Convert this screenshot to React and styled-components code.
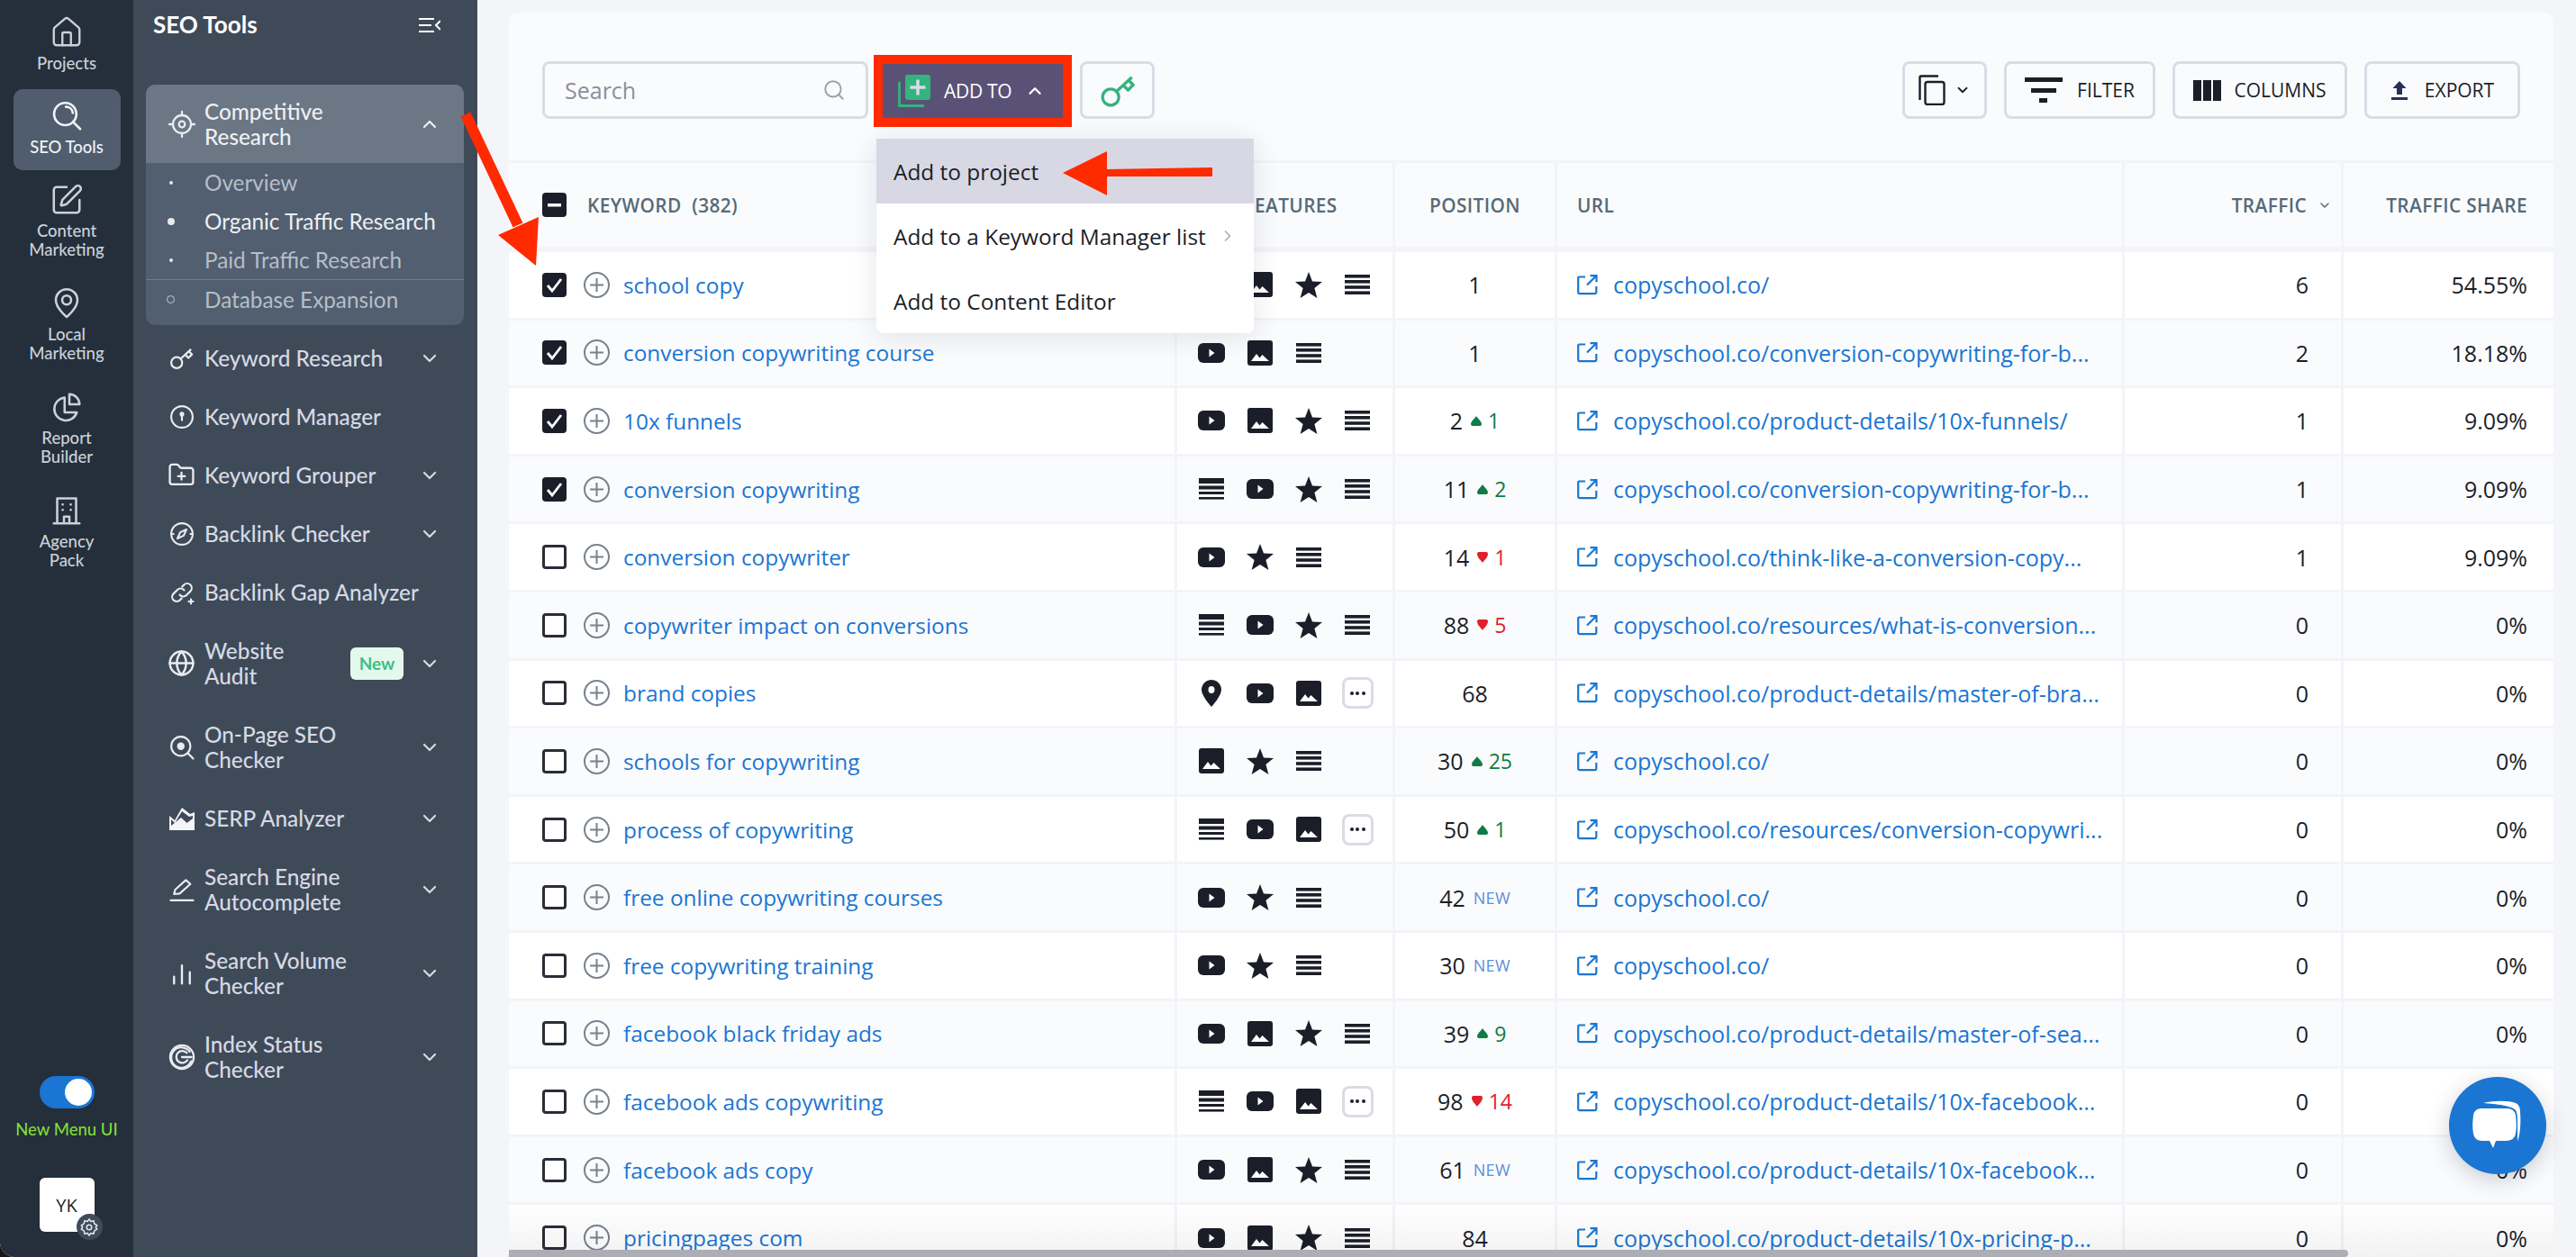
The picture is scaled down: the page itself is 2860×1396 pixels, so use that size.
import styled, { createGlobalStyle } from "styled-components";
import { ChevronDown, ChevronUp, ChevronRight, House, SquarePen, Globe, FolderPlus, Search } from "lucide-react";

const GlobalStyle = createGlobalStyle`
html, body {
    margin: 0;
    padding: 0;
    height: 100%;
    background: #1b1512;
}
* { box-sizing: border-box; }
`

const Page = styled.div`
width: 2860px;
height: 1396px;
display: flex;
overflow: hidden;
position: relative;
border-bottom-left-radius: 16px;
font-family: "Open Sans", sans-serif;
background: #F4F5F9;
`

///// left rail

const Rail = styled.nav`
width: 148px;
flex: none;
display: flex;
flex-direction: column;
align-items: center;
gap: 3.5px;
padding: 6px 0 28px;
background: #242F3B;
font-family: Lato, sans-serif;
`
const RailItem = styled.div`
width: 119px;
flex: none;
height: ${({$double})=>$double ? "111.5px" : "89.5px"};
padding-top: 11.5px;
display: flex;
flex-direction: column;
align-items: center;
border-radius: 10px;
color: ${({$active})=>$active ? "#F0F2F5" : "#CBD1D9"};
background: ${({$active})=>$active ? "#4F5D6E" : "transparent"};
font-size: 18.5px;
line-height: 21.5px;
font-weight: 500;
text-align: center;
`
const RailIcon = styled.div`
height: 36px;
margin-bottom: 6px;
display: flex;
align-items: center;
justify-content: center;
`
const RailBottom = styled.div`
margin-top: auto;
display: flex;
flex-direction: column;
align-items: center;
`
const Toggle = styled.div`
width: 61px;
height: 36px;
padding: 3px;
display: flex;
justify-content: flex-end;
border-radius: 18px;
background: #1A76D2;
`
const ToggleKnob = styled.div`
width: 30px;
height: 30px;
border-radius: 50%;
background: white;
`
const ToggleLabel = styled.div`
margin: 13px 0 44px;
color: #7FDB3A;
font-size: 18.5px;
line-height: 20px;
font-weight: 500;
white-space: nowrap;
`
const Avatar = styled.div`
width: 61px;
height: 60px;
position: relative;
display: flex;
align-items: center;
justify-content: center;
border-radius: 6px;
background: white;
color: #1B1E28;
font-size: 20px;
font-weight: 500;
font-family: "Open Sans", sans-serif;
`
const GearBadge = styled.div`
position: absolute;
right: -9px;
bottom: -9px;
width: 29px;
height: 29px;
display: flex;
align-items: center;
justify-content: center;
border-radius: 50%;
background: #3E4B5C;
color: #E3E7EC;
`

///// tools panel

const Panel = styled.aside`
width: 382px;
flex: none;
padding: 0 15px 0 14px;
background: #3F4A59;
font-family: Lato, sans-serif;
`
const PanelHead = styled.div`
height: 94px;
padding: 10px 26px 0 8px;
display: flex;
align-items: flex-start;
justify-content: space-between;
color: white;
font-size: 26px;
line-height: 34px;
font-weight: 700;
`
const Group = styled.div`
margin-bottom: 4px;
overflow: hidden;
border-radius: 10px;
background: #515F70;
`
const ToolRow = styled.div`
height: ${({$double})=>$double ? "93px" : "65px"};
display: flex;
align-items: center;
padding-right: 26px;
color: #D6DAE4;
font-size: 24.3px;
line-height: 28px;
font-weight: 500;
`
const GroupHead = styled(ToolRow)`
height: 87px;
color: #EDEFF3;
background: #6B7784;
`
const ToolIcon = styled.div`
width: 65px;
padding-left: 14px;
flex: none;
display: flex;
align-items: center;
justify-content: center;
color: #E9ECF0;
`
const ToolName = styled.div`
flex: 1;
`
const NewBadge = styled.div`
width: 59px;
height: 36px;
margin-right: 17px;
display: flex;
align-items: center;
justify-content: center;
border-radius: 6px;
background: #E4F8ED;
color: #3DBE82;
font-size: 19px;
font-weight: 700;
`
const SubItem = styled.div`
height: 43px;
display: flex;
align-items: center;
color: ${({$active})=>$active ? "#EDEFF3" : "#B6BEC9"};
font-size: 24.3px;
`
const SubBullet = styled.span`
width: 65px;
padding-right: 10px;
flex: none;
display: flex;
align-items: center;
justify-content: center;
&::before{
    content: "";
    width: ${({$active})=>$active ? "8px" : "4px"};
    height: ${({$active})=>$active ? "8px" : "4px"};
    border-radius: 50%;
    background: #E6E9ED;
}
`
const SubItemLast = styled(SubItem)`
height: 51px;
padding-bottom: 7px;
border-top: 1.5px solid #6F7E90;
`
const HollowBullet = styled.span`
width: 65px;
padding-right: 10px;
flex: none;
display: flex;
align-items: center;
justify-content: center;
&::before{
    content: "";
    width: 7px;
    height: 7px;
    border-radius: 50%;
    border: 1px solid #C6CDD6;
}
`

///// content card

const Main = styled.main`
flex: 1;
min-width: 0;
padding: 14px 25px 0 35px;
`
const Card = styled.div`
height: 1382px;
position: relative;
overflow: hidden;
border-radius: 10px 10px 0 0;
background: #FAFBFD;
`
const Toolbar = styled.div`
height: 164px;
padding: 54px 37px 0;
display: flex;
align-items: flex-start;
`
const SearchBox = styled.div`
width: 362px;
height: 64px;
padding: 0 22px;
display: flex;
align-items: center;
justify-content: space-between;
border: 3px solid #DBDBE7;
border-radius: 8px;
color: #8B9099;
font-size: 25px;
`
const AddWrap = styled.div`
margin: 3px 19px 0 16px;
position: relative;
z-index: 3;
`
const AddButton = styled.div`
width: 200px;
height: 60px;
padding-left: 17px;
display: flex;
align-items: center;
outline: 10px solid #FF2A00;
background: #5A5276;
color: white;
font-size: 21px;
font-weight: 500;
`
const AddLabel = styled.span`
margin: 0 15px 0 15px;
letter-spacing: -0.3px;
`
const Dropdown = styled.div`
position: absolute;
top: 83px;
left: -7px;
width: 419px;
overflow: hidden;
border-radius: 0 0 8px 8px;
background: white;
box-shadow: 0 4px 30px rgba(40,44,70,.12);
`
const DropdownItem = styled.div`
height: 72px;
padding: 0 19px;
display: flex;
align-items: center;
justify-content: space-between;
background: ${({$active})=>$active ? "#D8D8E4" : "white"};
color: #1B1E28;
font-size: 24.4px;
`
const IconButton = styled.div`
height: 64px;
flex: none;
display: flex;
align-items: center;
justify-content: center;
gap: ${({$gap})=>$gap || 14}px;
width: ${({$width})=>$width}px;
border: 3px solid #DBDBE7;
border-radius: 8px;
color: #1B1E28;
font-size: 21px;
font-weight: 500;
`
const Spacer = styled.div`
flex: 1;
`
const ToolbarRight = styled.div`
display: flex;
gap: 19px;
`

///// table

const Table = styled.div`
display: flex;
flex-direction: column;
gap: 3px;
padding-top: 3px;
background: #F3F4F8;
`
const HeaderRow = styled.div`
display: grid;
grid-template-columns: 739px 239px 177px 627px 240px 233px;
column-gap: 3px;
height: 93px;
margin-bottom: 3px;
`
const Row = styled.div`
display: grid;
grid-template-columns: 739px 239px 177px 627px 240px 233px;
column-gap: 3px;
height: 72.6px;
`
const HeaderCell = styled.div`
display: flex;
align-items: center;
justify-content: ${({$align})=>$align || "flex-start"};
padding: ${({$pad})=>$pad || "0 29px"};
background: #FAFBFD;
color: #566A78;
font-size: 20.8px;
font-weight: 600;
letter-spacing: .4px;
white-space: nowrap;
`
const Cell = styled.div`
display: flex;
align-items: center;
background: ${({$odd})=>$odd ? "white" : "#FAFBFD"};
color: #1B1E28;
font-size: 25px;
white-space: nowrap;
`
const KeywordCell = styled(Cell)`
padding-left: 37px;
`
const KeywordLink = styled.span`
margin-left: 15px;
color: #1A76D2;
font-size: 24.4px;
`
const CheckBox = styled.div`
width: 27px;
height: 27px;
flex: none;
display: flex;
align-items: center;
justify-content: center;
border: ${({$on})=>$on ? "none" : "3px solid #2A2D38"};
border-radius: 4px;
background: ${({$on})=>$on ? "#1B1E28" : "white"};
color: white;
`
const PlusCircle = styled.div`
width: 29px;
height: 29px;
margin-left: 19px;
flex: none;
display: flex;
align-items: center;
justify-content: center;
border: 2.5px solid #76828E;
border-radius: 50%;
color: #76828E;
`
const FeatureCell = styled(Cell)`
display: grid;
grid-template-columns: repeat(4, 54px);
padding-left: 11px;
justify-items: center;
color: #1B1E28;
`
const PositionCell = styled(Cell)`
justify-content: center;
gap: 9px;
`
const Delta = styled.span`
display: inline-flex;
align-items: center;
gap: 7px;
font-size: 23px;
color: ${({$up})=>$up ? "#0F7B46" : "#E0202C"};
`
const NewTag = styled.span`
font-size: 18px;
font-weight: 500;
letter-spacing: .3px;
color: #5B8FD8;
`
const UrlCell = styled(Cell)`
padding-left: 22px;
gap: 17px;
color: #1A76D2;
`
const NumberCell = styled(Cell)`
justify-content: flex-end;
padding-right: ${({$pad})=>$pad}px;
`
const MoreButton = styled.div`
width: 35px;
height: 35px;
display: flex;
align-items: center;
justify-content: center;
gap: 2.5px;
border: 3px solid #DBDBE7;
border-radius: 8px;
background: white;
`
const MoreDot = styled.i`
width: 4px;
height: 4px;
border-radius: 50%;
background: #1B1E28;
`

///// floating parts

const ScrollThumb = styled.div`
position: absolute;
left: 0;
bottom: 0;
width: 2042px;
height: 8px;
border-radius: 0 6px 6px 0;
background: #ADADB6;
`
const BottomShade = styled.div`
position: absolute;
left: 0;
right: 0;
bottom: 0;
height: 60px;
pointer-events: none;
background: linear-gradient(to bottom, rgba(0,0,0,0), rgba(0,0,0,.05));
`
const ChatBubble = styled.div`
position: absolute;
left: 2719px;
top: 1196px;
width: 108px;
height: 108px;
display: flex;
align-items: center;
justify-content: center;
border-radius: 50%;
background: #1A76D2;
box-shadow: 0 6px 24px rgba(30,40,60,.22);
`
const Annotations = styled.svg`
position: absolute;
left: 0;
top: 0;
z-index: 5;
pointer-events: none;
`

///// icons

const Icon = ({size=30, children, ...rest})=>(
    <svg width={size} height={size} viewBox="0 0 24 24" fill="none" stroke="currentColor" strokeWidth="1.7" strokeLinecap="round" strokeLinejoin="round" {...rest}>{children}</svg>
);

const YoutubeIcon = ()=>(
    <svg width="30" height="22" viewBox="0 0 30 22"><rect width="30" height="22" rx="6" fill="#1B1E28"/><path d="M12.5 6.5v9l6-4.5z" fill="white"/></svg>
);
const ImageIcon = ()=>(
    <svg width="28" height="28" viewBox="0 0 28 28"><rect width="28" height="28" rx="3" fill="#1B1E28"/><path d="M4 23l6-8 3.5 4.5 3-3.5L24 23z" fill="white"/></svg>
);
const StarIcon = ()=>(
    <svg width="30" height="29" viewBox="0 0 30 29"><path d="M15 0l4 10.5 11 .6-8.6 6.900 3 11L15 23l-9.400 6 3-11L0 11.100l11-.6z" fill="#1B1E28"/></svg>
);
const LinesIcon = ()=>(
    <svg width="28" height="22" viewBox="0 0 28 22" fill="#1B1E28"><rect width="28" height="3.600"/><rect y="6" width="28" height="3.600"/><rect y="12.200" width="28" height="3.600"/><rect y="18.400" width="28" height="3.600"/></svg>
);
const ParagraphIcon = ()=>(
    <svg width="28" height="24" viewBox="0 0 28 24" fill="#1B1E28"><rect width="28" height="6"/><rect y="8.500" width="28" height="4"/><rect y="15" width="28" height="3"/><rect y="21" width="28" height="2.600"/></svg>
);
const PinIcon = ()=>(
    <svg width="22" height="30" viewBox="0 0 22 30"><path d="M11 0C4.900 0 0 4.900 0 11c0 7 11 19 11 19s11-12 11-19C22 4.900 17.100 0 11 0z" fill="#1B1E28"/><ellipse cx="11" cy="11" rx="3.500" ry="4" fill="white"/></svg>
);
const FEATURE_ICONS = {
    yt: YoutubeIcon,
    img: ImageIcon,
    star: StarIcon,
    lines: LinesIcon,
    para: ParagraphIcon,
    pin: PinIcon,
    more: ()=>(<MoreButton><MoreDot/><MoreDot/><MoreDot/></MoreButton>),
};

const KeyIcon = ({size=28, color="currentColor"})=>(
    <svg width={size} height={size} viewBox="0 0 28 28" fill="none" stroke={color} strokeWidth="2.300" strokeLinejoin="round"><circle cx="8.500" cy="19.500" r="6.300"/><path d="M13 15L25 4M18.500 10.500l3.500 3.500 4-4-3.500-3.500"/></svg>
);
const CopyPlusIcon = ()=>(
    <svg width="36" height="36" viewBox="0 0 36 36"><path d="M1.500 8v26.500H29" fill="none" stroke="#35B37E" strokeWidth="2.800"/><rect x="8" y="0" width="28" height="28" rx="3" fill="#35B37E"/><path d="M22 5.500v17M13.500 14h17" stroke="#D8DEE4" strokeWidth="3.400"/></svg>
);
const DevicesIcon = ()=>(
    <svg width="30" height="34" viewBox="0 0 30 34" fill="none" stroke="#1B1E28" strokeWidth="2.400"><path d="M1.500 28V3q0-1.500 1.500-1.500h19"/><rect x="7.500" y="8" width="21" height="25" rx="2.500"/></svg>
);
const FilterIcon = ()=>(
    <svg width="42" height="28" viewBox="0 0 42 28" fill="#1B1E28"><rect width="42" height="5"/><rect x="7" y="12" width="28" height="5"/><rect x="16" y="23" width="9" height="5"/></svg>
);
const ColumnsIcon = ()=>(
    <svg width="31" height="23" viewBox="0 0 31 23" fill="#1B1E28"><rect width="9" height="23"/><rect x="11" width="9" height="23"/><rect x="22" width="9" height="23"/></svg>
);
const ExportIcon = ()=>(
    <svg width="20" height="21" viewBox="0 0 20 21" fill="#27305A"><path d="M10 0l7.500 8H13v7H7V8H2.500z"/><rect x="1" y="18" width="18" height="3"/></svg>
);
const ExternalIcon = ()=>(
    <svg width="23" height="23" viewBox="0 0 23 23" fill="none" stroke="#1A76D2" strokeWidth="2.200"><path d="M9 2.500H2.500q-1.300 0-1.300 1.300v16q0 1.300 1.300 1.300H20q1.300 0 1.300-1.300V13M11 11.500L21 1.500M14.500 1.200h7v7"/></svg>
);

const RAIL_ITEMS = [
    {name:["Projects"], icon:<House size={38} strokeWidth={1.5}/>},
    {name:["SEO Tools"], active:true, icon:<Icon size={38}><circle cx="11" cy="10.500" r="7.800"/><path d="M16.500 16l5 5M11.500 5.500c2.500 0 4.500 1.800 4.800 4.200"/></Icon>},
    {name:["Content","Marketing"], icon:<SquarePen size={38} strokeWidth={1.6}/>},
    {name:["Local","Marketing"], icon:<Icon size={36}><path d="M12 22s-8-6.500-8-12.500a8 8 0 0 1 16 0C20 15.500 12 22 12 22z"/><circle cx="12" cy="9.500" r="3.300"/></Icon>},
    {name:["Report","Builder"], icon:<Icon size={36}><path d="M10.500 5a8.500 8.500 0 1 0 9 11H10.500z"/><path d="M14 2.500v7.500h7.500A7.500 7.500 0 0 0 14 2.500z"/></Icon>},
    {name:["Agency","Pack"], icon:<Icon size={36}><path d="M5 21V3h14v18M2.500 21.500h19M10 21v-4.500h4V21M9 7.500h.1M15 7.500h.1M9 11.500h.1M15 11.500h.1"/></Icon>},
];

const TOOLS = [
    {name:["Keyword Research"], chevron:true, icon:<KeyIcon size={27}/>},
    {name:["Keyword Manager"], icon:<Icon size={30}><circle cx="12" cy="12" r="9.500"/><path d="M12 10v5"/><circle cx="12" cy="9.500" r="1.200" fill="currentColor"/></Icon>},
    {name:["Keyword Grouper"], chevron:true, icon:<FolderPlus size={31} strokeWidth={1.8}/>},
    {name:["Backlink Checker"], chevron:true, icon:<Icon size={30}><circle cx="12" cy="12" r="9.500"/><path d="M16 8l-2.500 5.500L8 16l2.500-5.500zM2.500 12h2M19.500 12h2"/></Icon>},
    {name:["Backlink Gap Analyzer"], icon:<Icon size={30}><path d="M10 14a4 4 0 0 0 6 .4l3.500-3.500a4 4 0 0 0-5.700-5.700l-1.500 1.500M14 10a4 4 0 0 0-6-.4l-3.500 3.500a4 4 0 0 0 5.700 5.700l1.500-1.500M20 18v4M18 20h4"/></Icon>},
    {name:["Website","Audit"], chevron:true, badge:true, icon:<Globe size={31} strokeWidth={1.9}/>},
    {name:["On-Page SEO","Checker"], chevron:true, icon:<Icon size={30}><circle cx="11" cy="11" r="8.500"/><circle cx="11" cy="11" r="2.500" fill="currentColor"/><path d="M17.500 17.500l4.500 4.500"/></Icon>},
    {name:["SERP Analyzer"], chevron:true, icon:<svg width="28" height="26" viewBox="0 0 28 26"><path d="M0 10l6 5 8-14 9 7 5-2v20H0z" fill="#F4F5F7"/><path d="M2 14l4 4 8-13 8 6 4-1v3l-6.500 5-6.500-6L2 21z" fill="#3F4A59"/></svg>},
    {name:["Search Engine","Autocomplete"], chevron:true, icon:<Icon size={30}><path d="M5 16l1-4L15.500 3.500l4 3.500L10 15.500zM2 21.500h20"/></Icon>},
    {name:["Search Volume","Checker"], chevron:true, icon:<Icon size={30} strokeWidth={1.9}><path d="M5 21v-6M12 21V5M19 21v-10"/></Icon>},
    {name:["Index Status","Checker"], chevron:true, icon:<Icon size={32}><circle cx="12" cy="12" r="9.800"/><path d="M18.500 7.500a8.500 8.500 0 1 0 1 8M20 12h-8M16 8.500a5 5 0 1 0 .5 6"/></Icon>},
];

const HOME = "copyschool.co/";
const ROWS = [
    {kw:"school copy", on:true, f:["yt","img","star","lines"], pos:"1", url:HOME, tr:"6", share:"54.55%"},
    {kw:"conversion copywriting course", on:true, f:["yt","img","lines"], pos:"1", url:"copyschool.co/conversion-copywriting-for-b...", tr:"2", share:"18.18%"},
    {kw:"10x funnels", on:true, f:["yt","img","star","lines"], pos:"2", up:1, url:"copyschool.co/product-details/10x-funnels/", tr:"1", share:"9.09%"},
    {kw:"conversion copywriting", on:true, f:["para","yt","star","lines"], pos:"11", up:2, url:"copyschool.co/conversion-copywriting-for-b...", tr:"1", share:"9.09%"},
    {kw:"conversion copywriter", f:["yt","star","lines"], pos:"14", down:1, url:"copyschool.co/think-like-a-conversion-copy...", tr:"1", share:"9.09%"},
    {kw:"copywriter impact on conversions", f:["para","yt","star","lines"], pos:"88", down:5, url:"copyschool.co/resources/what-is-conversion...", tr:"0", share:"0%"},
    {kw:"brand copies", f:["pin","yt","img","more"], pos:"68", url:"copyschool.co/product-details/master-of-bra...", tr:"0", share:"0%"},
    {kw:"schools for copywriting", f:["img","star","lines"], pos:"30", up:25, url:HOME, tr:"0", share:"0%"},
    {kw:"process of copywriting", f:["para","yt","img","more"], pos:"50", up:1, url:"copyschool.co/resources/conversion-copywri...", tr:"0", share:"0%"},
    {kw:"free online copywriting courses", f:["yt","star","lines"], pos:"42", isNew:true, url:HOME, tr:"0", share:"0%"},
    {kw:"free copywriting training", f:["yt","star","lines"], pos:"30", isNew:true, url:HOME, tr:"0", share:"0%"},
    {kw:"facebook black friday ads", f:["yt","img","star","lines"], pos:"39", up:9, url:"copyschool.co/product-details/master-of-sea...", tr:"0", share:"0%"},
    {kw:"facebook ads copywriting", f:["para","yt","img","more"], pos:"98", down:14, url:"copyschool.co/product-details/10x-facebook...", tr:"0", share:"0%"},
    {kw:"facebook ads copy", f:["yt","img","star","lines"], pos:"61", isNew:true, url:"copyschool.co/product-details/10x-facebook...", tr:"0", share:"0%"},
    {kw:"pricingpages com", f:["yt","img","star","lines"], pos:"84", url:"copyschool.co/product-details/10x-pricing-p...", tr:"0", share:"0%"},
];

function Lines({lines}){
    return lines.map((line)=>(<div key={line}>{line}</div>));
}

function PositionDelta({row}){
    if(row.up) return (
        <Delta $up>
            <svg width="12" height="11" viewBox="0 0 12 11"><path d="M6 0c2 3 6 6 6 9q0 2-2 2H2q-2 0-2-2C0 6 4 3 6 0z" fill="currentColor"/></svg>
            {row.up}
        </Delta>
    );
    if(row.down) return (
        <Delta>
            <svg width="12" height="12" viewBox="0 0 12 12"><path d="M6 12C4 9 0 6 0 2q0-2 2-2h8q2 0 2 2C12 6 8 9 6 12z" fill="currentColor"/></svg>
            {row.down}
        </Delta>
    );
    if(row.isNew) return <NewTag>NEW</NewTag>;
    return null;
}

function TableRow({row, odd}){
    return (
        <Row>
            <KeywordCell $odd={odd}>
                <CheckBox $on={row.on}>
                    {row.on && <svg width="19" height="17" viewBox="0 0 19 17" fill="none" stroke="white" strokeWidth="2.800"><path d="M2 9l5 6L17 2"/></svg>}
                </CheckBox>
                <PlusCircle>
                    <svg width="15" height="15" viewBox="0 0 15 15" stroke="currentColor" strokeWidth="2"><path d="M7.500 0v15M0 7.500h15"/></svg>
                </PlusCircle>
                <KeywordLink>{row.kw}</KeywordLink>
            </KeywordCell>
            <FeatureCell $odd={odd}>
                {row.f.map((name, i)=>{
                    const FeatureIcon = FEATURE_ICONS[name];
                    return <FeatureIcon key={name + i}/>;
                })}
            </FeatureCell>
            <PositionCell $odd={odd}>
                {row.pos}
                <PositionDelta row={row}/>
            </PositionCell>
            <UrlCell $odd={odd}>
                <ExternalIcon/>
                {row.url}
            </UrlCell>
            <NumberCell $odd={odd} $pad={36}>{row.tr}</NumberCell>
            <NumberCell $odd={odd} $pad={29}>{row.share}</NumberCell>
        </Row>
    );
}

export default function App(){
    return (
        <Page>
            <GlobalStyle/>
            <Rail>
                {RAIL_ITEMS.map((item)=>(
                    <RailItem key={item.name[0]} $active={item.active} $double={item.name.length > 1}>
                        <RailIcon>{item.icon}</RailIcon>
                        <Lines lines={item.name}/>
                    </RailItem>
                ))}
                <RailBottom>
                    <Toggle><ToggleKnob/></Toggle>
                    <ToggleLabel>New Menu UI</ToggleLabel>
                    <Avatar>
                        YK
                        <GearBadge>
                            <Icon size={22}><circle cx="12" cy="12" r="3"/><path d="M12 2l2 3 3.500-.8.800 3.500 3.200 2-1.500 2.300 1.500 2.300-3.200 2-.8 3.500L14 19l-2 3-2-3-3.500.8-.8-3.500-3.200-2L4 12 2.500 9.700l3.200-2 .8-3.500L10 5z"/></Icon>
                        </GearBadge>
                    </Avatar>
                </RailBottom>
            </Rail>

            <Panel>
                <PanelHead>
                    SEO Tools
                    <svg width="24" height="20" viewBox="0 0 24 20" fill="none" stroke="white" strokeWidth="2" style={{marginTop:8}}><path d="M0 3h17M0 10h14M0 17h17M24 5l-5 5 5 5"/></svg>
                </PanelHead>
                <Group>
                    <GroupHead>
                        <ToolIcon>
                            <Icon size={32}><circle cx="12" cy="12" r="7.500"/><circle cx="12" cy="12" r="2.500"/><path d="M12 1.500v3M12 19.500v3M1.500 12h3M19.500 12h3"/></Icon>
                        </ToolIcon>
                        <ToolName><Lines lines={["Competitive","Research"]}/></ToolName>
                        <ChevronUp size={24} strokeWidth={2.2}/>
                    </GroupHead>
                    <SubItem><SubBullet/>Overview</SubItem>
                    <SubItem $active><SubBullet $active/>Organic Traffic Research</SubItem>
                    <SubItem><SubBullet/>Paid Traffic Research</SubItem>
                    <SubItemLast><HollowBullet/>Database Expansion</SubItemLast>
                </Group>
                {TOOLS.map((tool)=>(
                    <ToolRow key={tool.name[0]} $double={tool.name.length > 1}>
                        <ToolIcon>{tool.icon}</ToolIcon>
                        <ToolName><Lines lines={tool.name}/></ToolName>
                        {tool.badge && <NewBadge>New</NewBadge>}
                        {tool.chevron && <ChevronDown size={24} strokeWidth={2.2}/>}
                    </ToolRow>
                ))}
            </Panel>

            <Main>
                <Card>
                    <Toolbar>
                        <SearchBox>
                            Search
                            <Search size={26} strokeWidth={1.8} color="#9CA1AB"/>
                        </SearchBox>
                        <AddWrap>
                            <AddButton>
                                <CopyPlusIcon/>
                                <AddLabel>ADD TO</AddLabel>
                                <ChevronUp size={22} strokeWidth={2.6}/>
                            </AddButton>
                            <Dropdown>
                                <DropdownItem $active>Add to project</DropdownItem>
                                <DropdownItem>
                                    Add to a Keyword Manager list
                                    <ChevronRight size={20} color="#A9ADB8"/>
                                </DropdownItem>
                                <DropdownItem>Add to Content Editor</DropdownItem>
                            </Dropdown>
                        </AddWrap>
                        <IconButton $width={83}><KeyIcon size={40} color="#35B37E"/></IconButton>
                        <Spacer/>
                        <ToolbarRight>
                            <IconButton $width={94} $gap={10}><DevicesIcon/><ChevronDown size={18} strokeWidth={2.4}/></IconButton>
                            <IconButton $width={168} $gap={16}><FilterIcon/>FILTER</IconButton>
                            <IconButton $width={194}><ColumnsIcon/>COLUMNS</IconButton>
                            <IconButton $width={173} $gap={18}><ExportIcon/>EXPORT</IconButton>
                        </ToolbarRight>
                    </Toolbar>
                    <Table>
                        <HeaderRow>
                            <HeaderCell $pad="0 0 0 37px">
                                <CheckBox $on>
                                    <svg width="15" height="4" viewBox="0 0 15 4" fill="white"><rect width="15" height="3.500"/></svg>
                                </CheckBox>
                                <span style={{marginLeft:23}}>KEYWORD &nbsp;(382)</span>
                            </HeaderCell>
                            <HeaderCell $pad="0 0 0 18px">SERP FEATURES</HeaderCell>
                            <HeaderCell $align="center">POSITION</HeaderCell>
                            <HeaderCell $pad="0 0 0 22px">URL</HeaderCell>
                            <HeaderCell $align="flex-end" $pad="0 10px 0 0">
                                TRAFFIC
                                <ChevronDown size={16} strokeWidth={2.2} style={{marginLeft:12}}/>
                            </HeaderCell>
                            <HeaderCell $align="flex-end">TRAFFIC SHARE</HeaderCell>
                        </HeaderRow>
                        {ROWS.map((row, i)=>(<TableRow key={row.kw} row={row} odd={i % 2 === 0}/>))}
                    </Table>
                    <BottomShade/>
                    <ScrollThumb/>
                </Card>
            </Main>

            <ChatBubble>
                <svg width="56" height="58" viewBox="0 0 56 58">
                    <path d="M12 4C24 1 40 1 48 4q5 2 5 10c1 12 0 26-3 32 0-14 1-30-2-34-4-5-22-7-36-8z" fill="white"/>
                    <path d="M10 10h28q9 0 10 8c1 8 1 14 0 20q-1 7-10 8H26l-3 8-4-8H10q-8-1-9-8c-1-6-1-12 0-20q1-8 9-8z" fill="white"/>
                </svg>
            </ChatBubble>

            <Annotations width="2860" height="1396" viewBox="0 0 2860 1396">
                <path d="M517 127L575 250" stroke="#FF2A00" strokeWidth="12" fill="none"/>
                <path d="M595 295L553 261L598 241z" fill="#FF2A00"/>
                <path d="M1346 186L1229 188V168L1180 192L1229 217V196L1346 196z" fill="#FF2A00"/>
            </Annotations>
        </Page>
    );
}
